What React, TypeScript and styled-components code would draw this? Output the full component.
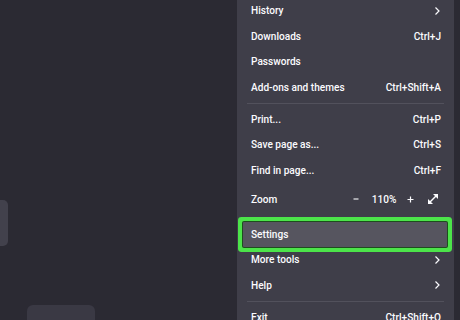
import { createGlobalStyle } from 'styled-components'
import styled from 'styled-components'

const GlobalStyle = createGlobalStyle`
  html, body {
    margin: 0;
    padding: 0;
    background: #2b2a33;
  }
  #root {
    width: 460px;
    height: 320px;
  }
`

const Page = styled.div`
  display: flex;
  width: 460px;
  height: 320px;
  overflow: hidden;
  background: #2b2a33;
  font-family: Roboto, 'Noto Sans', sans-serif;
`

const Backdrop = styled.div`
  flex: 1;
  display: flex;
  flex-direction: column;
  padding-top: 200px;
`

const SideTab = styled.div`
  width: 8px;
  height: 46px;
  background: #42414c;
  border-radius: 0 5px 5px 0;
`

const Spacer = styled.div`
  flex: 1;
`

const BottomTab = styled.div`
  width: 68px;
  height: 15px;
  margin-left: 27px;
  background: #3a3944;
  border-radius: 6px 6px 0 0;
`

const Menu = styled.div`
  width: 217px;
  background: #3f3e49;
  overflow: hidden;
`

const MenuList = styled.div`
  display: flex;
  flex-direction: column;
  margin-top: -2px;
`

const Edge = styled.div`
  width: 6px;
  background: #2b2a33;
`

const Row = styled.div<{ $tall?: boolean; $focused?: boolean }>`
  display: flex;
  align-items: center;
  justify-content: space-between;
  flex-shrink: 0;
  height: ${p => (p.$tall ? '32px' : '25.5px')};
  margin: 0 7px 0 6px;
  padding: 0 6px 0 8px;
  color: #fbfbfe;
  font-size: 10.1px;
  font-weight: 500;
  border-radius: 1px;
  background: ${p => (p.$focused ? '#56555f' : 'transparent')};
  box-shadow: ${p => (p.$focused ? '0 0 0 1px #1e4d1e, 0 0 0 5px #4ce44a' : 'none')};
`

const Label = styled.span`
  white-space: nowrap;
`

const Shortcut = styled.span`
  white-space: nowrap;
  color: #fbfbfe;
`

const Separator = styled.div`
  flex-shrink: 0;
  height: 1px;
  margin: 3px 10px 2.5px;
  background: #52515c;
`

const ZoomControls = styled.div`
  display: flex;
  align-items: center;
`

const ZoomButton = styled.span<{ $w: number }>`
  display: flex;
  align-items: center;
  justify-content: center;
  width: ${p => p.$w}px;
  color: #fbfbfe;
`

const Chevron = () => (
  <svg width="8" height="10" viewBox="0 0 8 10" fill="none">
    <path d="M2.5 1.5 6 5 2.5 8.5" stroke="#fbfbfe" strokeWidth="1.2" />
  </svg>
)

const Minus = () => (
  <svg width="6" height="6" viewBox="0 0 6 6">
    <path d="M0.5 3h5" stroke="#fbfbfe" strokeWidth="1.1" />
  </svg>
)

const Plus = () => (
  <svg width="7" height="7" viewBox="0 0 7 7">
    <path d="M0.5 3.5h6M3.5 0.5v6" stroke="#fbfbfe" strokeWidth="1.2" />
  </svg>
)

const Expand = () => (
  <svg width="12" height="12" viewBox="0 0 12 12">
    <path d="M2.5 9.5 9.5 2.5" stroke="#fbfbfe" strokeWidth="1.4" />
    <path d="M6 1h5v5z" fill="#fbfbfe" />
    <path d="M1 6v5h5z" fill="#fbfbfe" />
  </svg>
)

type Item = { label: string; shortcut?: string; submenu?: boolean }

const topItems: Item[] = [
  { label: 'History', submenu: true },
  { label: 'Downloads', shortcut: 'Ctrl+J' },
  { label: 'Passwords' },
  { label: 'Add-ons and themes', shortcut: 'Ctrl+Shift+A' },
]

const pageItems: Item[] = [
  { label: 'Print...', shortcut: 'Ctrl+P' },
  { label: 'Save page as...', shortcut: 'Ctrl+S' },
  { label: 'Find in page...', shortcut: 'Ctrl+F' },
]

const toolItems: Item[] = [
  { label: 'More tools', submenu: true },
  { label: 'Help', submenu: true },
]

const renderItem = (item: Item) => (
  <Row key={item.label}>
    <Label>{item.label}</Label>
    {item.shortcut && <Shortcut>{item.shortcut}</Shortcut>}
    {item.submenu && <Chevron />}
  </Row>
)

export default function App() {
  return (
    <>
      <GlobalStyle />
      <Page>
        <Backdrop>
          <SideTab />
          <Spacer />
          <BottomTab />
        </Backdrop>
        <Menu>
          <MenuList>
            {topItems.map(renderItem)}
            <Separator />
            {pageItems.map(renderItem)}
            <Row $tall>
              <Label>Zoom</Label>
              <ZoomControls>
                <ZoomButton $w={32}>
                  <Minus />
                </ZoomButton>
                <ZoomButton $w={24}>110%</ZoomButton>
                <ZoomButton $w={28}>
                  <Plus />
                </ZoomButton>
                <ZoomButton $w={17}>
                  <Expand />
                </ZoomButton>
              </ZoomControls>
            </Row>
            <Separator />
            <Row $focused>
              <Label>Settings</Label>
            </Row>
            {toolItems.map(renderItem)}
            <Separator />
            <Row>
              <Label>Exit</Label>
              <Shortcut>Ctrl+Shift+Q</Shortcut>
            </Row>
          </MenuList>
        </Menu>
        <Edge />
      </Page>
    </>
  )
}
